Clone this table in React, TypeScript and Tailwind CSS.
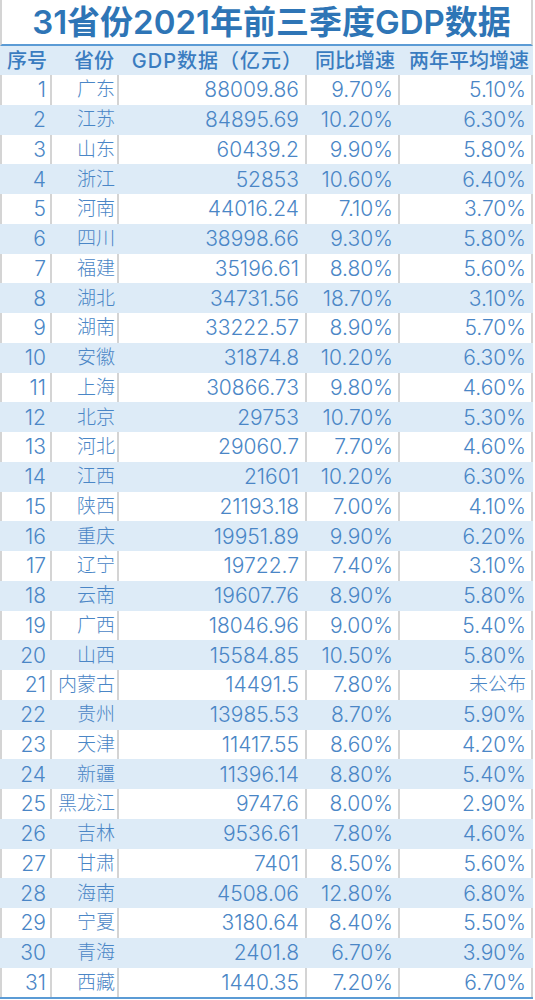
import React from 'react';

type Row = [number, string, string, string, string];

const rows: Row[] = [
  [1, '广东', '88009.86', '9.70%', '5.10%'],
  [2, '江苏', '84895.69', '10.20%', '6.30%'],
  [3, '山东', '60439.2', '9.90%', '5.80%'],
  [4, '浙江', '52853', '10.60%', '6.40%'],
  [5, '河南', '44016.24', '7.10%', '3.70%'],
  [6, '四川', '38998.66', '9.30%', '5.80%'],
  [7, '福建', '35196.61', '8.80%', '5.60%'],
  [8, '湖北', '34731.56', '18.70%', '3.10%'],
  [9, '湖南', '33222.57', '8.90%', '5.70%'],
  [10, '安徽', '31874.8', '10.20%', '6.30%'],
  [11, '上海', '30866.73', '9.80%', '4.60%'],
  [12, '北京', '29753', '10.70%', '5.30%'],
  [13, '河北', '29060.7', '7.70%', '4.60%'],
  [14, '江西', '21601', '10.20%', '6.30%'],
  [15, '陕西', '21193.18', '7.00%', '4.10%'],
  [16, '重庆', '19951.89', '9.90%', '6.20%'],
  [17, '辽宁', '19722.7', '7.40%', '3.10%'],
  [18, '云南', '19607.76', '8.90%', '5.80%'],
  [19, '广西', '18046.96', '9.00%', '5.40%'],
  [20, '山西', '15584.85', '10.50%', '5.80%'],
  [21, '内蒙古', '14491.5', '7.80%', '未公布'],
  [22, '贵州', '13985.53', '8.70%', '5.90%'],
  [23, '天津', '11417.55', '8.60%', '4.20%'],
  [24, '新疆', '11396.14', '8.80%', '5.40%'],
  [25, '黑龙江', '9747.6', '8.00%', '2.90%'],
  [26, '吉林', '9536.61', '7.80%', '4.60%'],
  [27, '甘肃', '7401', '8.50%', '5.60%'],
  [28, '海南', '4508.06', '12.80%', '6.80%'],
  [29, '宁夏', '3180.64', '8.40%', '5.50%'],
  [30, '青海', '2401.8', '6.70%', '3.90%'],
  [31, '西藏', '1440.35', '7.20%', '6.70%'],
];

const font = { fontFamily: 'Inter, "Noto Sans CJK SC", sans-serif' };

export default function App() {
  return (
    <div className="w-[535px] h-[1000px] bg-white overflow-hidden" style={font}>
      {/* Title */}
      <div className="h-[46px] w-[533px] border-x-2 border-x-[#d4d4d4] border-b-2 border-b-[#5b9bd5] flex items-center justify-center overflow-hidden pl-[10px]">
        <h1 className="text-[33px] leading-none font-semibold text-[#2e75b6] whitespace-nowrap">
          31省份2021年前三季度GDP数据
        </h1>
      </div>

      {/* Header */}
      <div className="h-[29px] w-[533px] bg-[#ddebf7] flex items-center text-[20px] font-medium text-[#3a7cc0] leading-none pl-[2px]">
        <div className="w-[50px] text-right pr-[5px] whitespace-nowrap">序号</div>
        <div className="w-[67px] text-right pr-[5px] whitespace-nowrap">省份</div>
        <div className="w-[188px] text-right pr-[4px] whitespace-nowrap tracking-[1px]">GDP数据（亿元）</div>
        <div className="w-[93px] text-right pr-[5px] whitespace-nowrap">同比增速</div>
        <div className="w-[133px] text-right pr-[4px] whitespace-nowrap">两年平均增速</div>
      </div>

      {/* Rows */}
      <div className="w-[533px] border-b-2 border-b-[#5b9bd5]">
        {rows.map(([no, prov, gdp, yoy, avg]) => {
          const shaded = no % 2 === 0;
          const line = shaded ? 'border-transparent' : 'border-[#d4d4d4]';
          return (
            <div
              key={no}
              className={`h-[29.75px] flex items-stretch text-[21px] font-light leading-none text-[#4a86c6] border-l-2 ${
                shaded ? 'bg-[#ddebf7] border-l-transparent' : 'bg-white border-l-[#d4d4d4]'
              }`}
            >
              <div className={`w-[50px] border-r-2 ${line} flex items-center justify-end pr-[4px]`}>{no}</div>
              <div className={`w-[67px] border-r-2 ${line} flex items-center justify-end pr-[2px] text-[19px]`}>{prov}</div>
              <div className={`w-[188px] border-r-2 ${line} flex items-center justify-end pr-[6px]`}>{gdp}</div>
              <div className={`w-[93px] border-r-2 ${line} flex items-center justify-end pr-[5px]`}>{yoy}</div>
              <div className={`w-[133px] border-r-2 ${line} flex items-center justify-end pr-[5px] ${avg === '未公布' ? 'text-[19px]' : ''}`}>
                {avg}
              </div>
            </div>
          );
        })}
      </div>
    </div>
  );
}
